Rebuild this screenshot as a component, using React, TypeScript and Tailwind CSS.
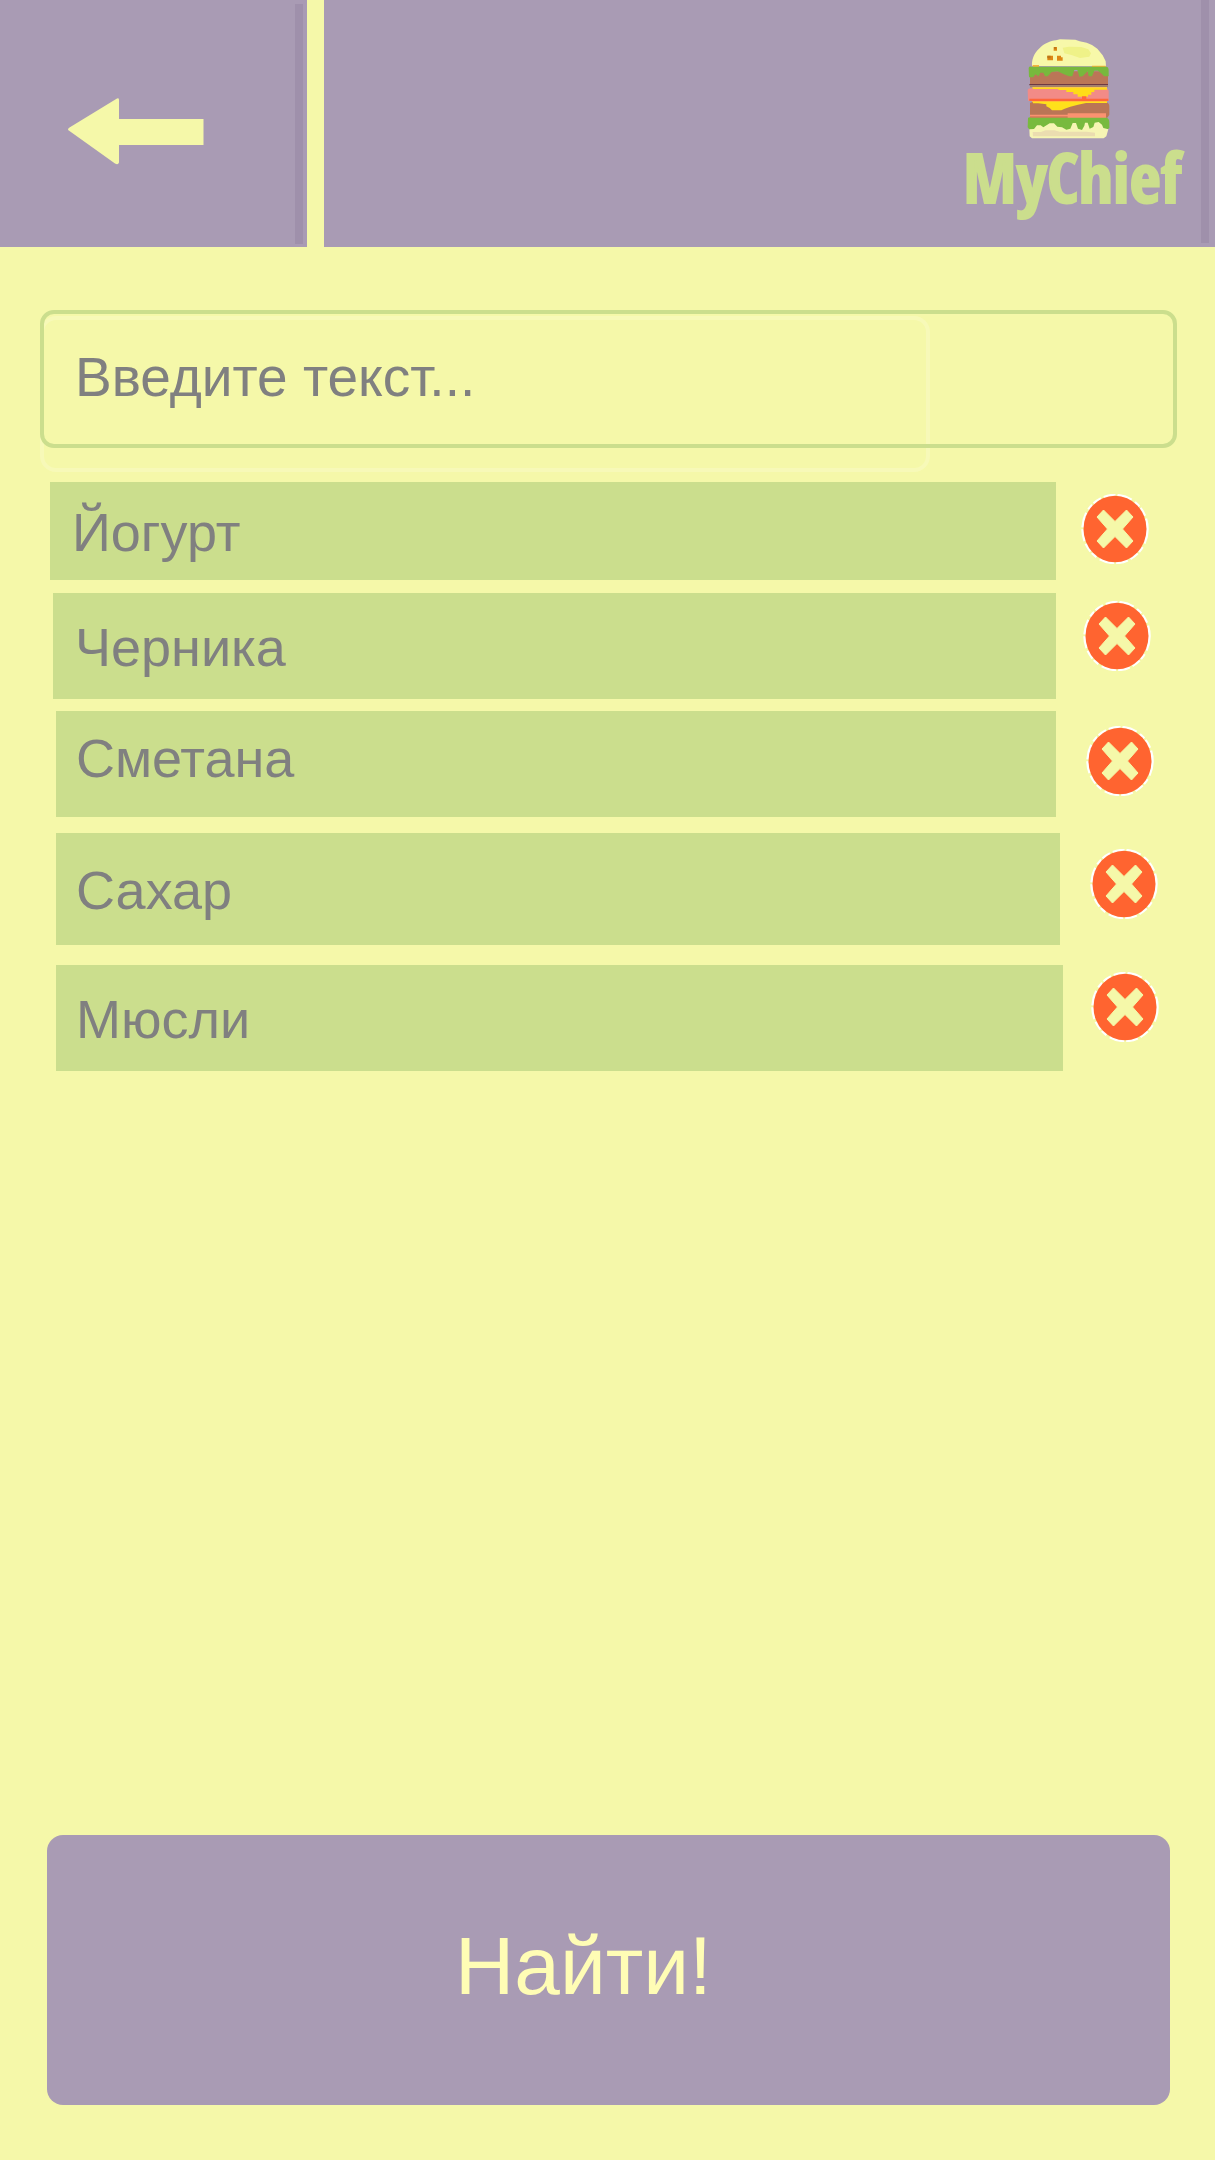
import { useState } from "react";

type Ingredient = {
  name: string;
  row: string;
  bar: string;
  action: string;
};

const initialIngredients: Ingredient[] = [
  { name: "Йогурт", row: "h-[98px] mb-[13px] pl-[50px]", bar: "pt-0.5 pl-[22px]", action: "w-[159px] pl-[25px] pt-3" },
  { name: "Черника", row: "h-[106px] mb-3 pl-[53px]", bar: "pt-0.5 pl-[22px]", action: "w-[159px] pl-[27px] pt-2" },
  { name: "Сметана", row: "h-[106px] mb-4 pl-14", bar: "pl-5 pb-3", action: "w-[159px] pl-[30px] pt-[15px]" },
  { name: "Сахар", row: "h-28 mb-5 pl-14", bar: "pt-0.5 pl-5", action: "w-[155px] pl-[30px] pt-4" },
  { name: "Мюсли", row: "h-[106px] pl-14", bar: "pt-0.5 pl-5", action: "w-[152px] pl-7 pt-[7px]" },
];

function ArrowIcon() {
  return (
    <svg viewBox="0 0 136 68" className="h-[68px] w-[136px]" fill="#f5f8a9" aria-hidden="true">
      <path d="M1.5 29.5 49 .6Q51-.8 51 2v19h84.500v26H51v17.500Q50 67.500 47 65.500L1.500 33Q-1.500 31.500 1.500 29.500Z" />
    </svg>
  );
}

function CrossIcon() {
  return (
    <svg viewBox="0 0 68 70" className="h-[70px] w-[68px]" aria-hidden="true">
      <ellipse cx="34" cy="35" rx="32.500" ry="34" fill="none" stroke="#fff" strokeWidth="2.500" strokeDasharray="15 4 6 2 9 3 12 2" />
      <ellipse cx="34" cy="35" rx="31.500" ry="33.300" fill="#ff6430" />
      <path
        d="m22.500 16 11.500 11.500L45.500 16 52 23 41.500 35 52 47 45.500 54 34 42.500 22.500 54 16 47 26.500 35 16 23Z"
        fill="#f5f8a9"
        stroke="#f5f8a9"
        strokeWidth="1"
        strokeLinejoin="round"
      />
    </svg>
  );
}

function BurgerIcon() {
  return (
    <svg viewBox="45 18 270 315" className="h-[105px] w-[90px]" aria-hidden="true">
      <path d="M66 108C65 88 72 70 87 56C103 40 121 33 138 31L150 28L196 29L209 34L230 38L246 45L262 56L278 76L287 94L288 109Z" fill="#f7f8a9" />
      <path d="M158 53L177 50L214 51L235 58L243 70L238 80L210 84L184 75L163 70Z" fill="#eff288" />
      <path d="M131 51h10v11h-10ZM112 77h17v14h-17ZM141 77h12v5h5v10h-17Z" fill="#de8613" />
      <path d="M112 77h10v8h-10ZM132 51h6v5h-6Z" fill="#bd7518" />
      <path d="M68 105h19v6H68ZM246 107h41v5h-41Z" fill="#f5b13d" />
      <path d="M60 124H294V164H60Z" fill="#bb7657" />
      <path d="M58 162H294V166H58Z" fill="#6f3943" />
      <path d="M56 114Q57 109 64 110H289Q296 111 296 121V139H282L276 132L264 122L253 122L246 139H236L233 124L218 139L208 140L202 120H193L187 139H177L160 132L143 124L125 126L113 139H105L100 128H91L86 139L76 133L70 142H57Z" fill="#78b83d" />
      <path d="M60 166H294V172H60Z" fill="#a68163" />
      <path d="M67 171H291V175H67Z" fill="#ffc943" />
      <path d="M53 180Q54 175 62 175H289Q296 176 296 184V212H54Z" fill="#f28b87" />
      <path d="M68 174H291V179H253V186H244V194H234V200H203V193H190V186H169V180H145V177H68Z" fill="#ffdb18" />
      <path d="M216 199h13v7h-13ZM58 206h237v7H58Z" fill="#ff663b" />
      <path d="M66 213H291V219H66Z" fill="#ffb53e" />
      <path d="M60 220Q61 216 69 217H289Q298 219 298 230V254L292 263H60Z" fill="#ba7556" />
      <path d="M69 215H291V219H228L204 224L181 230L164 236L154 241H126L119 234L109 229V223L85 220H69Z" fill="#ffe01b" />
      <path d="M60 254H173V264H60ZM173 250H288V264H173Z" fill="#fb9270" />
      <path d="M60 259H173V264H60Z" fill="#d47959" />
      <path d="M54 265Q56 260 63 263H289Q298 265 298 278V294L285 304H62L53 292Z" fill="#78ba3e" />
      <path d="M58 298L72 297L81 286H92L100 292L119 280H132L142 290L156 292L169 299L181 296L188 279H198L204 296L216 300L223 287L225 278H233L239 296L250 291L254 278L266 276L276 284L280 294L295 298L289 319L281 325H66L59 319Z" fill="#f6f5b4" />
      <path d="M68 306L93 306L107 301H133L149 305H229L255 308V319H69Z" fill="#ebddb0" />
    </svg>
  );
}

export default function App() {
  const [items, setItems] = useState(initialIngredients);

  return (
    <div className="flex min-h-screen flex-col bg-[#f5f8a9] font-['Liberation_Sans',Arial,sans-serif] text-[#808080]">
      <header className="flex h-[247px] shrink-0 gap-[17px]">
        <button type="button" aria-label="Назад" className="flex w-[307px] shrink-0 items-center justify-between bg-[#a99bb4] pr-1 pl-[68px]">
          <span className="pt-4">
            <ArrowIcon />
          </span>
          <span className="h-60 w-2 bg-[#9f90ab]" />
        </button>
        <div className="flex flex-1 justify-end bg-[#a99bb4] pr-1.5">
          <a href="#home" aria-label="MyChief" className="flex flex-col items-center pt-9 pr-5 text-[#cbde8d]">
            <span className="pr-1">
              <BurgerIcon />
            </span>
            <span className="font-['Open_Sans_Condensed','Roboto_Condensed','Liberation_Sans_Narrow','Liberation_Sans',sans-serif] text-[68px] leading-[72px] font-bold [-webkit-text-stroke:2px_#cbde8d]">
              MyChief
            </span>
          </a>
          <span className="h-[243px] w-2 bg-[#9f90ab]" />
        </div>
      </header>

      <main className="flex flex-1 flex-col pt-[63px] pb-[55px]">
        <div className="relative mr-[38px] ml-10">
          <span className="pointer-events-none absolute top-1.5 right-[247px] -bottom-6 left-0 rounded-2xl border-4 border-[#f7f9b8]" />
          <input
            type="text"
            aria-label="Введите текст"
            placeholder="Введите текст..."
            className="relative block h-[138px] w-full rounded-[14px] border-4 border-[#cbde8d] bg-transparent pb-1 pl-[31px] text-[55px] outline-none placeholder:text-[#808080] placeholder:opacity-100"
          />
        </div>

        <ul className="mt-[34px] mb-10">
          {items.map((item) => (
            <li key={item.name} className={`flex ${item.row}`}>
              <span className={`flex flex-1 items-center bg-[#cbde8d] text-[54px] leading-none ${item.bar}`}>{item.name}</span>
              <span className={`shrink-0 ${item.action}`}>
                <button
                  type="button"
                  aria-label={`Удалить ${item.name}`}
                  className="block"
                  onClick={() => setItems(items.filter((other) => other !== item))}
                >
                  <CrossIcon />
                </button>
              </span>
            </li>
          ))}
        </ul>

        <button type="button" className="mt-auto mr-[45px] ml-[47px] h-[270px] rounded-2xl bg-[#a99bb4] pr-[50px] pb-2 text-[82px] leading-none text-[#fffdb5]">
          Найти!
        </button>
      </main>
    </div>
  );
}
